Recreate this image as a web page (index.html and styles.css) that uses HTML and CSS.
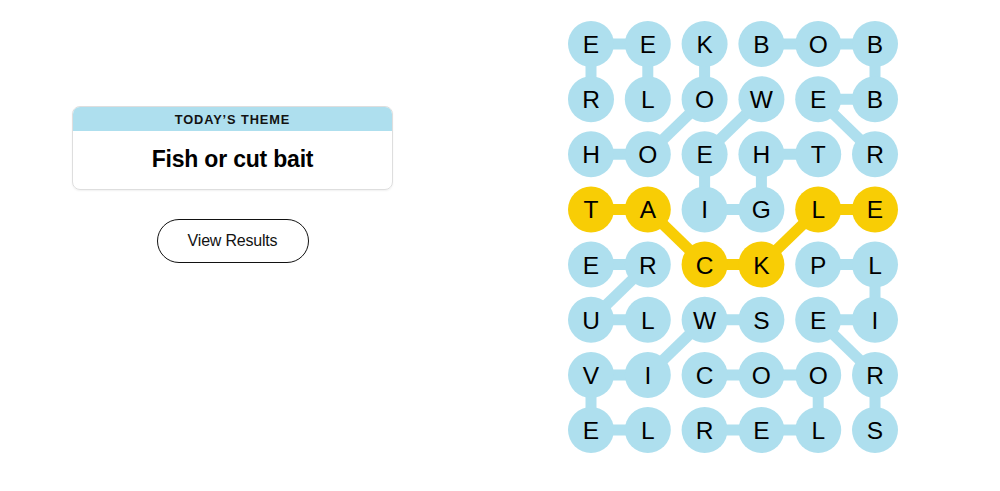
FILE: index.html
```html
<!DOCTYPE html>
<html lang="en">
<head>
<meta charset="UTF-8">
<meta name="viewport" content="width=device-width, initial-scale=1.0">
<title>Strands</title>
<link rel="stylesheet" href="styles.css">
</head>
<body>

<div class="page">
  <div class="panel">
    <div class="theme-card">
      <div class="theme-label">TODAY’S THEME</div>
      <div class="theme-title">Fish or cut bait</div>
    </div>
    <button class="results-btn">View Results</button>
  </div>

  <div class="board">
    <svg id="board" width="334" height="434" viewBox="0 0 334 434"></svg>
  </div>
</div>

<script>
  // letras del tablero, fila por fila
  var rows = [
    "EEKBOB",
    "RLOWEB",
    "HOEHTR",
    "TAIGLE",
    "ERCKPL",
    "ULWSEI",
    "VICOOR",
    "ELRELS"
  ];

  // palabras encontradas: lista de celdas [fila, columna]
  var words = [
    { cells: [[1,0],[0,0],[0,1],[1,1]] },                   // REEL
    { cells: [[2,0],[2,1],[1,2],[0,2]] },                   // HOOK
    { cells: [[0,3],[0,4],[0,5],[1,5],[1,4],[2,5]] },       // BOBBER
    { cells: [[1,3],[2,2],[3,2],[3,3],[2,3],[2,4]] },       // WEIGHT
    { cells: [[3,0],[3,1],[4,2],[4,3],[3,4],[3,5]], spangram: true }, // TACKLE
    { cells: [[5,1],[5,0],[4,1],[4,0]] },                   // LURE
    { cells: [[4,4],[4,5],[5,5],[5,4],[6,5],[7,5]] },       // PLIERS
    { cells: [[5,3],[5,2],[6,1],[6,0],[7,0],[7,1]] },       // SWIVEL
    { cells: [[6,2],[6,3],[6,4],[7,4],[7,3],[7,2]] }        // COOLER
  ];

  var NS = "http://www.w3.org/2000/svg";
  var svg = document.getElementById("board");
  var colStep = 56.8, rowStep = 55.15, radius = 23;
  var found = {};

  function cx(c) { return radius + c * colStep; }
  function cy(r) { return radius + r * rowStep; }

  function add(tag, attrs, parent) {
    var el = document.createElementNS(NS, tag);
    for (var k in attrs) el.setAttribute(k, attrs[k]);
    (parent || svg).appendChild(el);
    return el;
  }

  var lines = add("g", {});
  var dots = add("g", {});

  words.forEach(function (w) {
    var cls = w.spangram ? "spangram" : "found";
    for (var i = 0; i < w.cells.length; i++) {
      var cell = w.cells[i];
      found[cell[0] + "-" + cell[1]] = cls;
      if (i > 0) {
        var prev = w.cells[i - 1];
        add("line", {
          x1: cx(prev[1]), y1: cy(prev[0]),
          x2: cx(cell[1]), y2: cy(cell[0]),
          "class": "link " + cls
        }, lines);
      }
    }
  });

  rows.forEach(function (row, r) {
    row.split("").forEach(function (letter, c) {
      var cls = found[r + "-" + c] || "";
      add("circle", { cx: cx(c), cy: cy(r), r: radius, "class": "dot " + cls }, dots);
      var t = add("text", { x: cx(c), y: cy(r) + 9, "class": "letter" }, dots);
      t.textContent = letter;
    });
  });
</script>

</body>
</html>
```

FILE: styles.css
```css
body {
  margin: 0;
  background: #fff;
  font-family: "Liberation Sans", Arial, sans-serif;
  color: #000;
}
.page {
  display: flex;
  height: 491px;
}
.panel {
  width: 465px;
  padding-top: 106px;
  display: flex;
  flex-direction: column;
  align-items: center;
}
.theme-card {
  width: 319px;
  border: 1px solid #dedede;
  border-radius: 8px;
  overflow: hidden;
  box-shadow: 0 1px 2px rgba(0, 0, 0, 0.06);
}
.theme-label {
  background-color: #aedfee;
  height: 24px;
  line-height: 26px;
  text-align: center;
  font-size: 12.8px;
  font-weight: bold;
  letter-spacing: 0.9px;
  color: #121212;
}
.theme-title {
  height: 58px;
  line-height: 56px;
  text-align: center;
  font-size: 23px;
  font-weight: bold;
  letter-spacing: -0.2px;
}
.results-btn {
  margin-top: 29px;
  width: 152px;
  height: 44px;
  border: 1px solid #121212;
  border-radius: 22px;
  background: #fff;
  font-family: "Liberation Sans", Arial, sans-serif;
  font-size: 16px;
  letter-spacing: -0.2px;
  color: #121212;
  cursor: pointer;
}
.board {
  margin-left: 103px;
  padding-top: 21px;
}
.dot {
  fill: #aedfee;
}
.dot.spangram {
  fill: #f8cd05;
}
.link {
  stroke: #aedfee;
  stroke-width: 11;
}
.link.spangram {
  stroke: #f8cd05;
}
.letter {
  font-family: "Liberation Sans", Arial, sans-serif;
  font-size: 24.5px;
  text-anchor: middle;
  fill: #000;
}
```
